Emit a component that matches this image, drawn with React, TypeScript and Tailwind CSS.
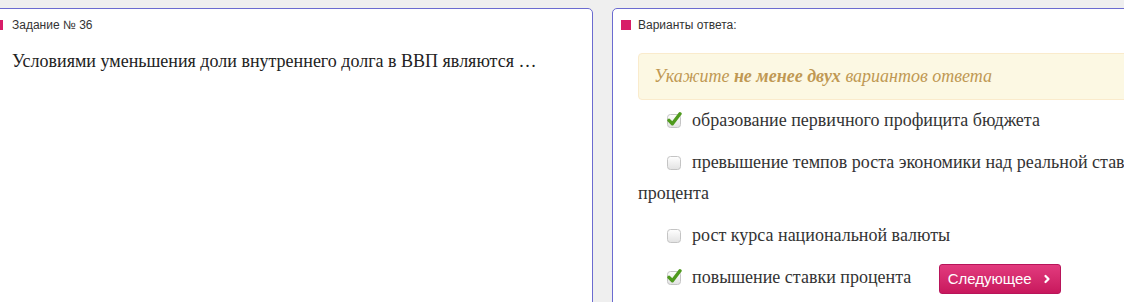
import React from "react";
import { ChevronRight } from "lucide-react";

const serif = "font-['Liberation_Serif','Times_New_Roman',serif]";
const sans = "font-['Liberation_Sans',Arial,sans-serif]";

const Check = ({ checked }: { checked: boolean }) => (
    <svg width="16" height="16" viewBox="0 0 16 16" className="inline-block align-[-2px] mr-[10px]">
        <defs>
            <linearGradient id="cbg" x1="0" y1="0" x2="0" y2="1">
                <stop offset="0" stopColor="#ffffff" />
                <stop offset="1" stopColor="#e2e2e2" />
            </linearGradient>
        </defs>
        <rect x="1.5" y="2.5" width="13" height="13" rx="3" fill="url(#cbg)" stroke="#c4c4c4" />
        {checked && (
            <path d="M3 8.4 L6.4 11.8 L14 1.8" fill="none" stroke="#4f9a1e" strokeWidth="3.4" strokeLinecap="round" strokeLinejoin="round" />
        )}
    </svg>
);

const options = [
    { text: "образование первичного профицита бюджета", checked: true },
    { text: "превышение темпов роста экономики над реальной ставкой процента", checked: false },
    { text: "рост курса национальной валюты", checked: false },
    { text: "повышение ставки процента", checked: true },
];

export default function App() {
    return (
        <div className="h-[302px] w-[1124px] overflow-hidden bg-[#efefef] pt-[8px]">
            <div className="flex gap-[19px] h-full">

                {/* LEFT: question */}
                <div className="-ml-[16px] w-[609px] shrink-0 h-[320px] bg-white border border-[#6b6bd0] rounded-tr-[5px] pl-[8px]">
                    <div className={`flex items-center gap-[9px] mt-[7px] text-[12px] text-[#333] ${sans}`}>
                        <span className="w-[10px] h-[10px] bg-[#d81d68]" />
                        Задание № 36
                    </div>
                    <p className={`mt-[16px] pl-[19px] text-[18px] leading-[22px] text-[#222] ${serif}`}>
                        Условиями уменьшения доли внутреннего долга в ВВП являются …
                    </p>
                </div>

                {/* RIGHT: answers */}
                <div className="w-[560px] shrink-0 h-[320px] bg-white border border-[#6b6bd0] rounded-tl-[5px] pl-[8px]">
                    <div className={`flex items-center gap-[7px] mt-[7px] text-[12px] text-[#333] ${sans}`}>
                        <span className="w-[10px] h-[10px] bg-[#d81d68]" />
                        Варианты ответа:
                    </div>

                    <div className="pl-[17px]">
                        <div className={`mt-[19px] h-[47px] flex items-center pl-[15px] bg-[#fcf8e3] border border-[#faebcc] rounded-[4px] text-[18px] italic text-[#c09853] ${serif}`}>
                            Укажите&nbsp;<b>не менее двух</b>&nbsp;вариантов ответа
                        </div>

                        <div className={`mt-[5px] text-[18px] leading-[31px] text-[#333] ${serif}`}>
                            {options.map((o, i) => (
                                <p key={i} className="mb-[11px] indent-[28px]">
                                    <Check checked={o.checked} />
                                    {o.text}
                                    {i === options.length - 1 && (
                                        <button className={`ml-[28px] inline-flex items-center justify-center align-middle gap-[9px] h-[30px] w-[122px] indent-0 whitespace-nowrap rounded-[3px] border border-[#b8145a] bg-linear-to-b from-[#e23a7e] to-[#c8175d] text-white text-[15px] ${sans}`}>
                                            Следующее
                                            <ChevronRight className="w-[12px] h-[12px] shrink-0" strokeWidth={4.5} />
                                        </button>
                                    )}
                                </p>
                            ))}
                        </div>
                    </div>
                </div>

            </div>
        </div>
    );
}
